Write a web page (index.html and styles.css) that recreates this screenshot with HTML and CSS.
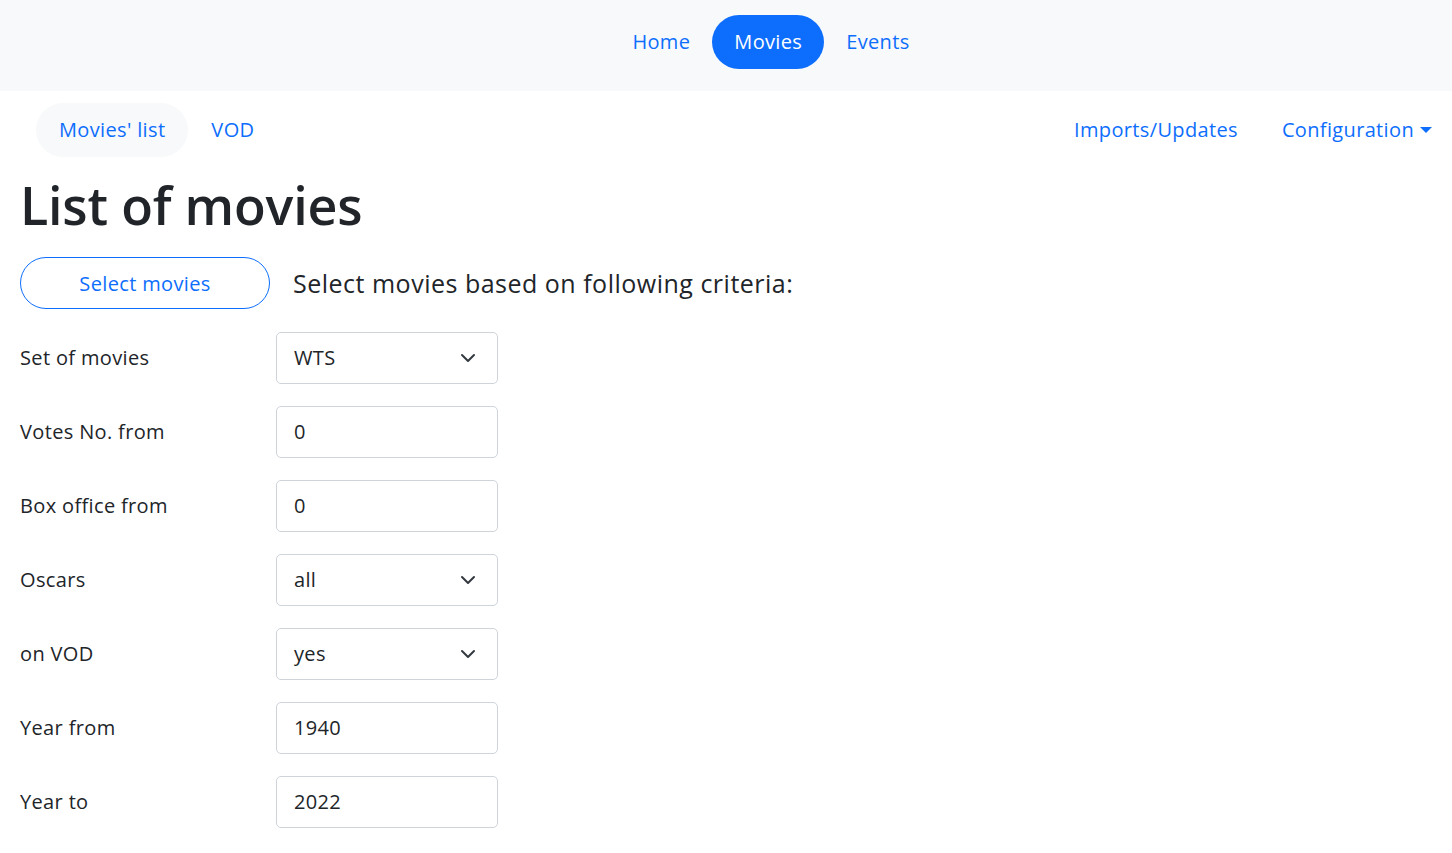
FILE: index.html
```html
<!DOCTYPE html>
<html lang="en">
<head>
<meta charset="utf-8">
<title>List of movies</title>
<link rel="stylesheet" href="styles.css">
</head>
<body>
<header class="topbar">
  <nav class="main-nav">
    <a class="nav-link" href="#">Home</a>
    <a class="nav-link active" href="#">Movies</a>
    <a class="nav-link" href="#">Events</a>
  </nav>
</header>
<nav class="sub-nav">
  <div class="sub-left">
    <a class="nav-link current" href="#">Movies' list</a>
    <a class="nav-link" href="#">VOD</a>
  </div>
  <div class="sub-right">
    <a class="nav-link" href="#">Imports/Updates</a>
    <a class="nav-link dropdown" href="#">Configuration<span class="caret"></span></a>
  </div>
</nav>
<main class="content">
  <h1 class="title">List of movies</h1>
  <div class="select-row">
    <button class="btn-outline" type="button">Select movies</button>
    <p class="criteria">Select movies based on following criteria:</p>
  </div>
  <form class="filters">
    <label class="f-label">Set of movies</label>
    <div class="f-control select">WTS<svg class="chev" viewBox="0 0 16 16"><path d="M2 5l6 6 6-6" fill="none" stroke="#343a40" stroke-width="2" stroke-linecap="round" stroke-linejoin="round"/></svg></div>
    <label class="f-label">Votes No. from</label>
    <div class="f-control">0</div>
    <label class="f-label">Box office from</label>
    <div class="f-control">0</div>
    <label class="f-label">Oscars</label>
    <div class="f-control select">all<svg class="chev" viewBox="0 0 16 16"><path d="M2 5l6 6 6-6" fill="none" stroke="#343a40" stroke-width="2" stroke-linecap="round" stroke-linejoin="round"/></svg></div>
    <label class="f-label">on VOD</label>
    <div class="f-control select">yes<svg class="chev" viewBox="0 0 16 16"><path d="M2 5l6 6 6-6" fill="none" stroke="#343a40" stroke-width="2" stroke-linecap="round" stroke-linejoin="round"/></svg></div>
    <label class="f-label">Year from</label>
    <div class="f-control">1940</div>
    <label class="f-label">Year to</label>
    <div class="f-control">2022</div>
  </form>
</main>
</body>
</html>
```
FILE: styles.css
```css
* { box-sizing: border-box; }
html, body { margin: 0; padding: 0; }
body {
  font-family: "Open Sans", "Noto Sans", sans-serif;
  font-size: 20px;
  line-height: 1.5;
  letter-spacing: 0.35px;
  color: #212529;
  background: #fff;
}
a { text-decoration: none; }
.topbar {
  background: #f8f9fa;
  height: 91px;
  padding-top: 15px;
}
.main-nav {
  display: flex;
  justify-content: center;
  padding-left: 90px;
}
.nav-link {
  display: inline-block;
  color: #0d6efd;
  padding: 12px 22px;
  line-height: 30px;
  border-radius: 30px;
}
.nav-link.active {
  background: #0d6efd;
  color: #fff;
}
.sub-nav {
  display: flex;
  justify-content: space-between;
  padding: 12px 20px 0 36px;
}
.sub-left, .sub-right { display: flex; }
.sub-left .nav-link { padding: 12px 23px; }
.sub-right .nav-link { padding: 12px 22px; }
.sub-right .dropdown { padding-right: 0; }
.nav-link.current {
  background: #f8f9fa;
}
.caret {
  display: inline-block;
  margin-left: 6px;
  vertical-align: 4px;
  border-top: 6px solid #0d6efd;
  border-left: 6px solid transparent;
  border-right: 6px solid transparent;
}
.content {
  padding: 0 20px;
}
.title {
  margin: 17px 0 21px;
  font-size: 52px;
  font-weight: 600;
  line-height: 1.2;
  letter-spacing: -0.2px;
}
.select-row {
  display: flex;
  align-items: center;
  gap: 23px;
}
.btn-outline {
  width: 250px;
  height: 52px;
  border: 1px solid #0d6efd;
  border-radius: 26px;
  background: #fff;
  color: #0d6efd;
  font-family: inherit;
  font-size: 20px;
  letter-spacing: 0.35px;
}
.criteria {
  margin: 0;
  font-size: 25px;
  letter-spacing: 0.5px;
}
.filters {
  display: grid;
  grid-template-columns: 256px 222px;
  row-gap: 22px;
  margin-top: 23px;
  align-items: center;
}
.f-label {
  font-size: 20px;
}
.f-control {
  height: 52px;
  border: 1px solid #ced4da;
  border-radius: 5px;
  padding: 0 17px;
  display: flex;
  align-items: center;
  justify-content: space-between;
  font-size: 20px;
}
.chev {
  width: 16px;
  height: 16px;
  margin-right: 4px;
}
```
